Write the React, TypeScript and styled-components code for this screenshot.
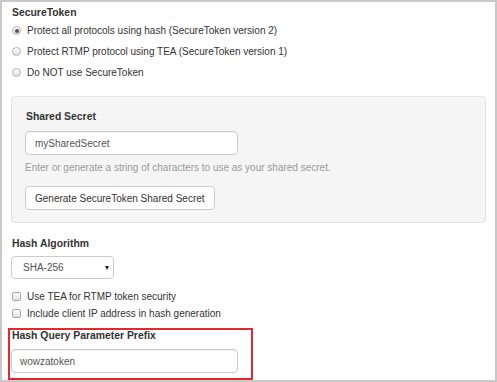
import React from "react";
import styled, { createGlobalStyle } from "styled-components";

const Global = createGlobalStyle`
  html, body { margin: 0; padding: 0; background: #fff; }
  body { font-family: "Liberation Sans", Arial, sans-serif; font-size: 10px; color: #333; }
  * { box-sizing: border-box; }
`;

const Frame = styled.div`
  width: 497px;
  height: 382px;
  border: 2px solid #c8c8c8;
  padding: 4px 9px 0 9px;
  display: flex;
  flex-direction: column;
  background: #fff;
`;

const Label = styled.div<{ $mt?: number }>`
  font-weight: bold;
  font-size: 10.4px;
  line-height: 14px;
  color: #333;
  margin-top: ${(p) => p.$mt ?? 0}px;
  padding-left: 1px;
`;

const OptionRow = styled.div<{ $h: number }>`
  display: flex;
  align-items: center;
  height: ${(p) => p.$h}px;
  color: #333;
  font-size: 10px;
`;

const RadioDot = styled.span<{ $checked?: boolean }>`
  width: 9px;
  height: 9px;
  border-radius: 50%;
  border: 1px solid #b4b4b4;
  background: linear-gradient(#fdfdfd, #e0e0e0);
  margin: 0 6px 0 1px;
  display: flex;
  align-items: center;
  justify-content: center;
  &::after {
    content: "";
    display: ${(p) => (p.$checked ? "block" : "none")};
    width: 4px;
    height: 4px;
    border-radius: 50%;
    background: #555;
  }
`;

const CheckBox = styled.span`
  width: 9px;
  height: 9px;
  border-radius: 2px;
  border: 1px solid #a8a8a8;
  background: linear-gradient(#fdfdfd, #e3e3e3);
  margin: 0 6px 0 1px;
`;

const Panel = styled.div`
  margin-top: 13px;
  border: 1px solid #e3e3e3;
  border-radius: 4px;
  background: #f5f5f5;
  padding: 13px 13px 12px 13px;
  height: 127px;
  display: flex;
  flex-direction: column;
  align-items: flex-start;
`;

const TextInput = styled.div<{ $w: number; $mt?: number; $pl?: number }>`
  width: ${(p) => p.$w}px;
  height: 24px;
  margin-top: ${(p) => p.$mt ?? 0}px;
  border: 1px solid #cccccc;
  border-radius: 4px;
  background: #fff;
  box-shadow: inset 0 1px 1px rgba(0, 0, 0, 0.06);
  color: #555;
  font-size: 10px;
  display: flex;
  align-items: center;
  padding-left: ${(p) => p.$pl ?? 8}px;
`;

const Help = styled.div`
  margin-top: 6px;
  line-height: 14px;
  color: #9a9a9a;
  font-size: 10px;
`;

const Button = styled.div`
  margin-top: 11px;
  height: 24px;
  padding: 0 9px;
  border: 1px solid #cccccc;
  border-radius: 4px;
  background: #fff;
  color: #333;
  font-size: 10px;
  display: flex;
  align-items: center;
`;

const Select = styled.div`
  margin-top: 5px;
  width: 103px;
  height: 23px;
  border: 1px solid #cccccc;
  border-radius: 4px;
  background: #fff;
  color: #555;
  font-size: 10px;
  display: flex;
  align-items: center;
  justify-content: space-between;
  padding: 0 4px 0 11px;
`;

const Arrow = styled.span`
  width: 0;
  height: 0;
  border-left: 2.5px solid transparent;
  border-right: 2.5px solid transparent;
  border-top: 4px solid #222;
`;

const Checks = styled.div`
  margin-top: 9px;
  display: flex;
  flex-direction: column;
`;

const Highlight = styled.div`
  position: relative;
  margin-top: 6px;
  padding-top: 1px;
  display: flex;
  flex-direction: column;
  align-items: flex-start;
  &::after {
    content: "";
    position: absolute;
    left: -3px;
    top: 0;
    width: 241px;
    height: 48px;
    border: 2px solid #e3292e;
    pointer-events: none;
  }
`;

export default function App() {
  return (
    <>
      <Global />
      <Frame>
        <Label>SecureToken</Label>
        <OptionRow $h={21}>
          <RadioDot $checked />
          Protect all protocols using hash (SecureToken version 2)
        </OptionRow>
        <OptionRow $h={21}>
          <RadioDot />
          Protect RTMP protocol using TEA (SecureToken version 1)
        </OptionRow>
        <OptionRow $h={21}>
          <RadioDot />
          Do NOT use SecureToken
        </OptionRow>
        <Panel>
          <Label>Shared Secret</Label>
          <TextInput $w={213} $mt={7} $pl={9}>mySharedSecret</TextInput>
          <Help>Enter or generate a string of characters to use as your shared secret.</Help>
          <Button>Generate SecureToken Shared Secret</Button>
        </Panel>
        <Label $mt={14}>Hash Algorithm</Label>
        <div>
          <Select>
            SHA-256
            <Arrow />
          </Select>
        </div>
        <Checks>
          <OptionRow $h={17}>
            <CheckBox />
            Use TEA for RTMP token security
          </OptionRow>
          <OptionRow $h={17}>
            <CheckBox />
            Include client IP address in hash generation
          </OptionRow>
        </Checks>
        <Highlight>
          <Label>Hash Query Parameter Prefix</Label>
          <TextInput $w={227} $mt={6} $pl={8}>wowzatoken</TextInput>
        </Highlight>
      </Frame>
    </>
  );
}
